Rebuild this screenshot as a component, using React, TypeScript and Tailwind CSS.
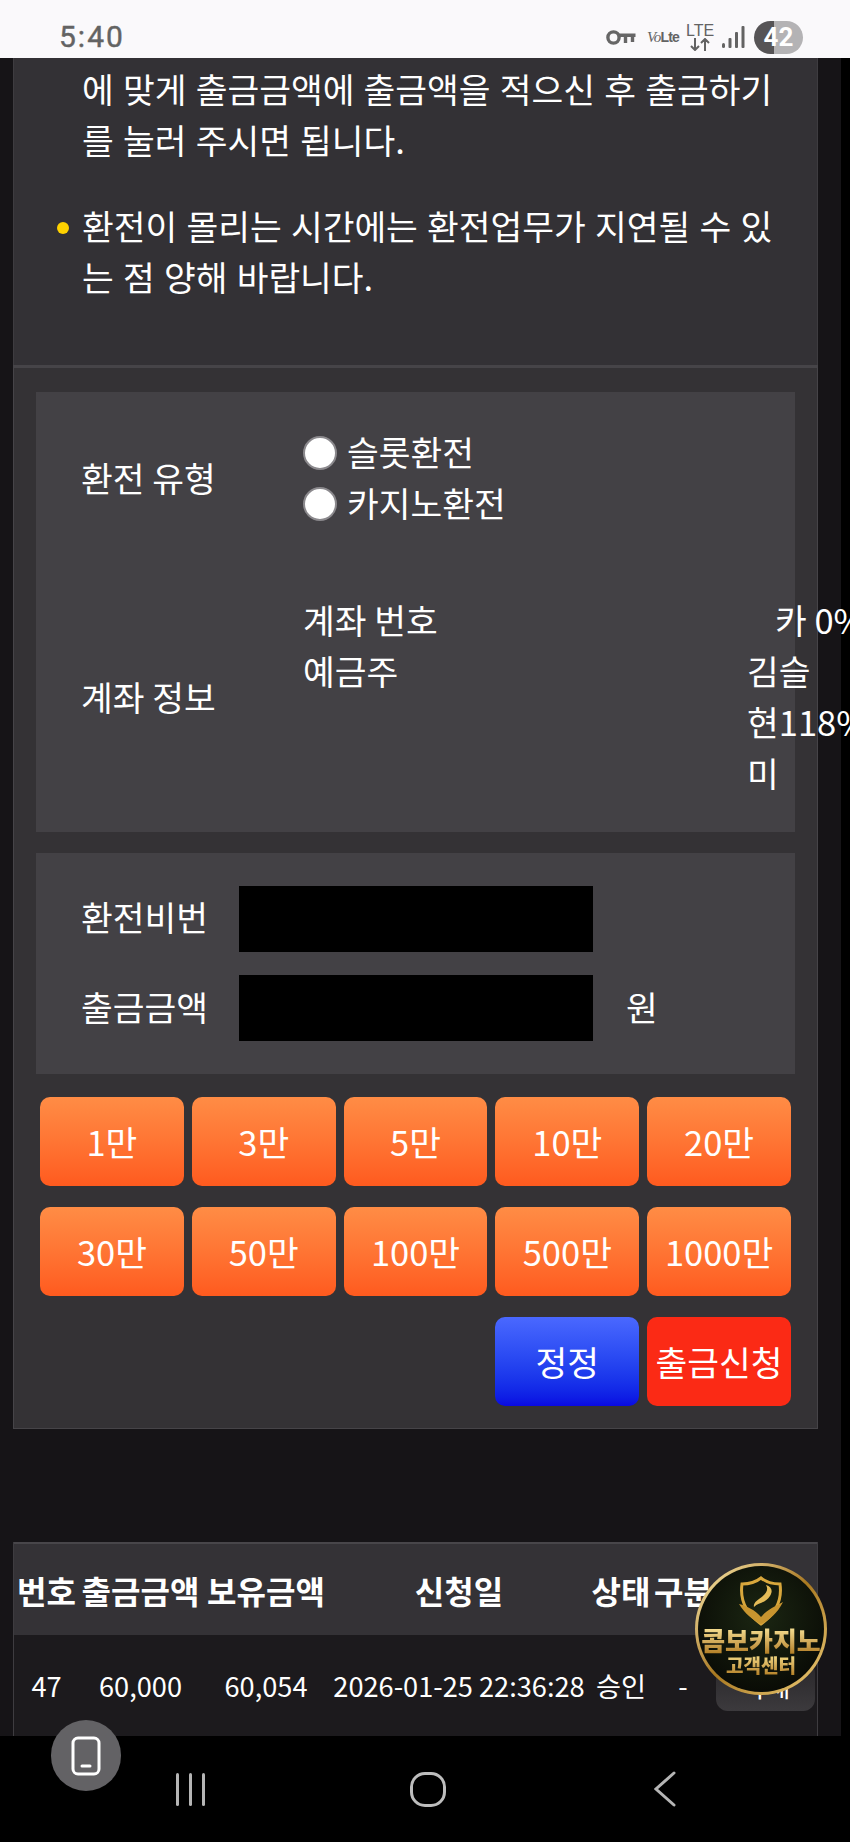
const amounts = ['1만', '3만', '5만', '10만', '20만', '30만', '50만', '100만', '500만', '1000만']
const tableCols = 'grid grid-cols-[65px_123px_128px_258px_66px_58px_107px]'

function StatusBar(): React.JSX.Element {
  return (
    <div className="flex h-[58px] shrink-0 items-center bg-[#faf9fb] pl-[59px] pt-[16px]">
      <span className="w-[547px] shrink-0 font-['Roboto',sans-serif] text-[30px] leading-none tracking-[2px] text-[#636363] [-webkit-text-stroke:0.4px_#636363]">5:40</span>
      <svg className="shrink-0" width="30" height="15" viewBox="0 0 30 15" fill="none" stroke="#666666" strokeWidth="3.4">
        <circle cx="7.5" cy="7.5" r="5.6" />
        <path d="M13 5.2H29.5M19.5 5.2V13M26.5 5.2V12" />
      </svg>
      <span className="ml-[11px] flex w-[30px] shrink-0 items-baseline whitespace-nowrap font-['Liberation_Sans',sans-serif] leading-none tracking-tighter text-[#636363]">
        <span className="font-['Liberation_Serif',serif] text-[15px] italic">Vo</span>
        <span className="text-[14px] font-bold">Lte</span>
      </span>
      <span className="ml-[10px] flex w-[26px] shrink-0 flex-col items-center font-['Liberation_Sans',sans-serif] text-[#636363]">
        <span className="text-[16px] leading-[14px]">LTE</span>
        <svg width="22" height="13" viewBox="0 0 22 13" fill="none" stroke="#636363" strokeWidth="2">
          <path d="M6 0V12M2 8L6 12L10 8M16 13V1M12 5L16 1L20 5" />
        </svg>
      </span>
      <svg className="ml-[9px] shrink-0" width="23" height="22" viewBox="0 0 23 22" fill="#636363">
        <rect x="0" y="17" width="3" height="5" rx="1.5" />
        <rect x="6.5" y="12" width="3" height="10" rx="1" />
        <rect x="13" y="6" width="3" height="16" rx="1" />
        <rect x="19.5" y="0" width="3" height="22" rx="1" />
      </svg>
      <span className="ml-[9px] flex h-[33px] w-[49px] shrink-0 items-center justify-center rounded-full bg-[linear-gradient(90deg,#565456_0,#565456_20px,#b4b3b5_20px,#b4b3b5_100%)] font-['Roboto',sans-serif] text-[26px] font-bold leading-none text-white">
        42
      </span>
    </div>
  )
}

function NoticePanel(): React.JSX.Element {
  return (
    <section className="h-[307px] border-x border-[#3e3c40] bg-[#333135] pl-[68px] pr-[40px] pt-[5px] text-[34.5px] leading-[51px] text-white [word-spacing:1.5px]">
      <p className="whitespace-nowrap">에 맞게 출금금액에 출금액을 적으신 후 출금하기<br />를 눌러 주시면 됩니다.</p>
      <div className="relative mt-[35px]">
        <span className="absolute -left-[25px] top-[22px] h-[12px] w-[12px] rounded-full bg-[#ffd200]" />
        <p className="whitespace-nowrap">환전이 몰리는 시간에는 환전업무가 지연될 수 있<br />는 점 양해 바랍니다.</p>
      </div>
    </section>
  )
}

function Radio({ label }: { label: string }): React.JSX.Element {
  return (
    <label className="flex h-[51px] items-center gap-[10px]">
      <span className="h-[34px] w-[34px] shrink-0 rounded-full border-2 border-[#8b898d] bg-white" />
      <span className="mb-[3px] whitespace-nowrap">{label}</span>
    </label>
  )
}

function AccountBox(): React.JSX.Element {
  return (
    <div className="flex h-[440px] flex-col gap-[67px] bg-[#434145] pl-[45px] pt-[35px]">
      <div className="flex items-center">
        <div className="mb-[2px] w-[222px] shrink-0 whitespace-nowrap">환전 유형</div>
        <div>
          <Radio label="슬롯환전" />
          <Radio label="카지노환전" />
        </div>
      </div>
      <div className="flex items-center">
        <div className="mb-[2px] w-[222px] shrink-0 whitespace-nowrap">계좌 정보</div>
        <div className="flex h-[203px] shrink-0 items-start">
          <div className="mt-[-2px] w-[444px] shrink-0">
            <div>계좌 번호</div>
            <div>예금주</div>
          </div>
          <div className="mt-[-2px] shrink-0 whitespace-nowrap">
            <div className="pl-[28px]">카 0%</div>
            <div>김슬</div>
            <div>현118%</div>
            <div>미</div>
          </div>
        </div>
      </div>
    </div>
  )
}

function AmountBox(): React.JSX.Element {
  return (
    <div className="mt-[21px] flex h-[221px] flex-col gap-[23px] bg-[#434145] pl-[45px] pt-[33px]">
      <div className="flex h-[66px] items-center">
        <span className="mb-[5px] w-[158px] shrink-0">환전비번</span>
        <input type="password" className="h-[66px] w-[354px] shrink-0 bg-black" />
      </div>
      <div className="flex h-[66px] items-center">
        <span className="mb-[4px] w-[158px] shrink-0">출금금액</span>
        <input type="text" className="h-[66px] w-[354px] shrink-0 bg-black" />
        <span className="mb-[4px] ml-[33px]">원</span>
      </div>
    </div>
  )
}

function WithdrawPanel(): React.JSX.Element {
  return (
    <section className="border border-t-[3px] border-[#464448] bg-[#343235] px-[22px] pb-[22px] pt-[24px] text-[34.5px] leading-[51px] text-white">
      <AccountBox />
      <AmountBox />
      <div className="mt-[23px] grid grid-cols-5 gap-x-[8px] gap-y-[21px] px-[4px]">
        {amounts.map((amount) => (
          <button key={amount} className="h-[89px] rounded-[10px] bg-gradient-to-b from-[#ff8c45] to-[#ff5a1e] text-center">
            {amount}
          </button>
        ))}
        <button className="col-start-4 h-[89px] rounded-[10px] bg-gradient-to-b from-[#4a68ff] to-[#0a08e2]">정정</button>
        <button className="h-[89px] whitespace-nowrap rounded-[10px] bg-[#fb2a15]">출금신청</button>
      </div>
    </section>
  )
}

function HistoryTable(): React.JSX.Element {
  return (
    <section className="mt-[113px] flex-1 border-x border-[#3e3c40] text-white">
      <div className={`${tableCols} h-[93px] items-center whitespace-nowrap border-t-2 border-[#48464a] bg-[#343236] text-center text-[32px] font-bold`}>
        <div>번호</div>
        <div>출금금액</div>
        <div>보유금액</div>
        <div>신청일</div>
        <div>상태</div>
        <div>구분</div>
        <div />
      </div>
      <div className={`${tableCols} h-[101px] items-center bg-[#1c1a1d] text-center text-[27.2px]`}>
        <div>47</div>
        <div>60,000</div>
        <div>60,054</div>
        <div className="whitespace-nowrap">2026-01-25 22:36:28</div>
        <div>승인</div>
        <div>-</div>
        <div className="flex justify-center">
          <button className="h-[50px] w-[99px] rounded-[12px] bg-gradient-to-b from-[#29272a] to-[#3c3a3d]">삭제</button>
        </div>
      </div>
    </section>
  )
}

function SupportBadge(): React.JSX.Element {
  return (
    <div className="absolute left-[695px] top-[1563px] h-[132px] w-[132px] rounded-full bg-gradient-to-br from-[#fff0b0] via-[#a9791f] to-[#f2d27a] p-[3px]">
      <div className="flex h-full w-full flex-col items-center rounded-full bg-[radial-gradient(circle_at_50%_40%,#1b2612,#0a0c06_75%)] pt-[10px]">
        <svg width="44" height="50" viewBox="0 0 44 50" fill="none">
          <path d="M22 2C27 6 33 8 41 8C43 22 39 36 22 48C5 36 1 22 3 8C11 8 17 6 22 2Z" stroke="#d8a73c" strokeWidth="3" />
          <path d="M0 28C8 30 16 34 22 41C28 34 36 30 44 26C38 38 30 44 22 48C14 44 6 38 0 28Z" fill="#c8952f" />
          <path d="M27 9C30 14 27 18 20 23C17 25 14 28 15 31C20 26 27 27 31 20C34 15 33 11 27 9Z" fill="#e4bc58" />
        </svg>
        <span className="whitespace-nowrap bg-gradient-to-b from-[#fbe79a] to-[#b27e22] bg-clip-text text-[26px] font-black leading-[28px] text-transparent">콤보카지노</span>
        <span className="whitespace-nowrap bg-gradient-to-b from-[#f8e08a] to-[#b27e22] bg-clip-text text-[19px] font-black leading-[22px] text-transparent">고객센터</span>
      </div>
    </div>
  )
}

function NavBar(): React.JSX.Element {
  return (
    <nav className="flex h-[106px] shrink-0 items-center bg-black pl-[72px]">
      <div className="flex w-[237px] justify-center gap-[10px]">
        <span className="h-[33px] w-[3px] rounded-full bg-[#b5b5b5]" />
        <span className="h-[33px] w-[3px] rounded-full bg-[#b5b5b5]" />
        <span className="h-[33px] w-[3px] rounded-full bg-[#b5b5b5]" />
      </div>
      <div className="flex w-[237px] justify-center">
        <span className="h-[35px] w-[36px] rounded-[15px] border-[3px] border-[#bdbdbd]" />
      </div>
      <div className="flex w-[237px] justify-center">
        <svg width="22" height="36" viewBox="0 0 22 36" fill="none" stroke="#b5b5b5" strokeWidth="3" strokeLinecap="round">
          <path d="M20 2L2 18L20 34" />
        </svg>
      </div>
    </nav>
  )
}

export default function App(): React.JSX.Element {
  return (
    <div className="relative flex h-[1842px] w-[850px] flex-col overflow-hidden bg-black font-['Noto_Sans_CJK_KR','Noto_Sans',sans-serif]">
      <StatusBar />
      <main className="flex w-[841px] flex-1 flex-col bg-[#161417] pl-[13px] pr-[23px]">
        <NoticePanel />
        <WithdrawPanel />
        <HistoryTable />
      </main>
      <NavBar />
      <SupportBadge />
      <button className="absolute left-[51px] top-[1720px] flex h-[71px] w-[70px] items-center justify-center rounded-full bg-[#636265]">
        <svg width="30" height="40" viewBox="0 0 30 40" fill="none" stroke="white" strokeWidth="3">
          <rect x="2" y="2" width="26" height="36" rx="5" />
          <path d="M11 30H19" strokeLinecap="round" />
        </svg>
      </button>
    </div>
  )
}
